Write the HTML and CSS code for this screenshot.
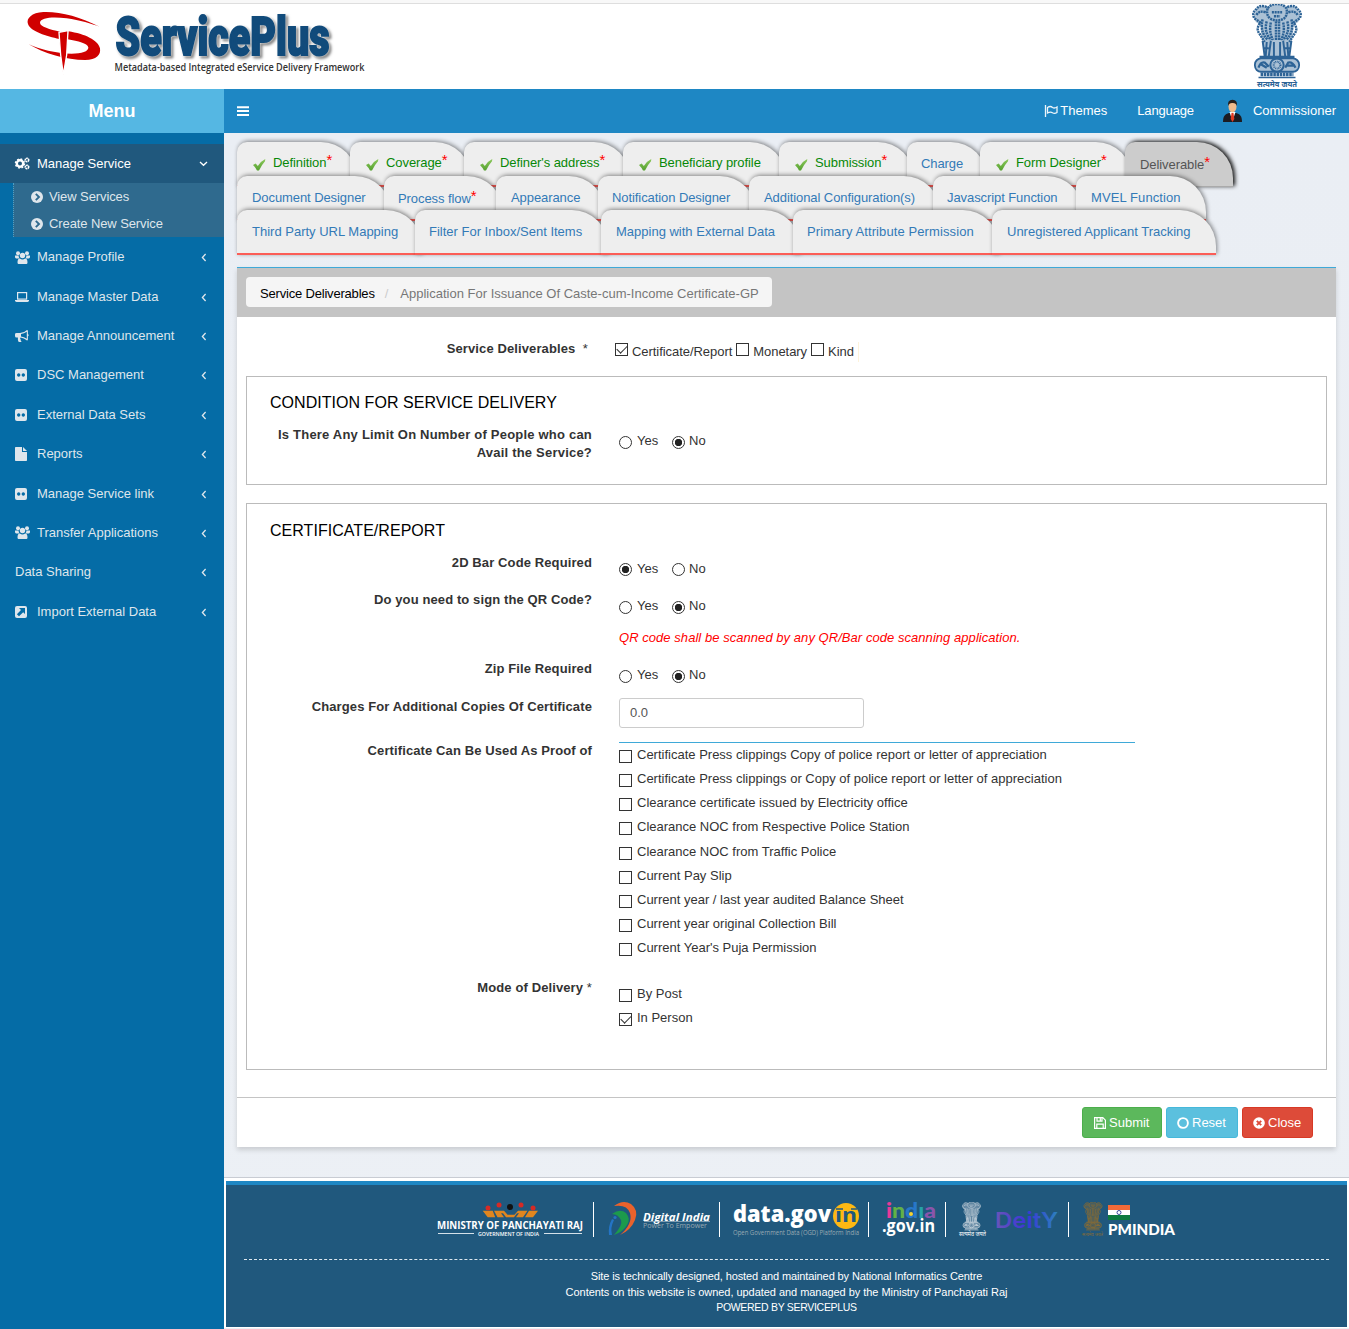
FILE: index.html
```html
<!DOCTYPE html>
<html lang="en">
<head>
<meta charset="utf-8">
<title>ServicePlus</title>
<link rel="stylesheet" href="styles.css">
</head>
<body>
<svg class="defs" width="0" height="0" aria-hidden="true">
  <symbol id="chev-left" viewBox="0 0 6 9"><path d="M4.6 1 1.4 4.5 4.6 8" fill="none" stroke="currentColor" stroke-width="1.3"/></symbol>
  <symbol id="users" viewBox="0 0 15 13"><circle cx="3" cy="2.2" r="2"/><circle cx="12" cy="2.2" r="2"/><path d="M0 4.5h3.6a4.4 4.4 0 0 0 .9 2.9H1.2Q0 7.4 0 6ZM15 4.500h-3.600a4.400 4.400 0 0 1-.9 2.900h3.300Q15 7.400 15 6Z"/><circle cx="7.500" cy="4.500" r="2.700"/><path d="M2.500 11.400c0-2.400.8-4 2.400-4 1.700 1.300 3.500 1.300 5.200 0 1.600 0 2.400 1.600 2.400 4 0 1-.7 1.600-1.600 1.600H4.100c-.9 0-1.600-.6-1.600-1.600Z"/></symbol>
  <symbol id="flickr" viewBox="0 0 12 12"><path fill-rule="evenodd" d="M2 0h8a2 2 0 0 1 2 2v8a2 2 0 0 1-2 2H2a2 2 0 0 1-2-2V2a2 2 0 0 1 2-2ZM3.700 4.300a1.700 1.700 0 1 0 .01 0ZM8.300 4.300a1.700 1.700 0 1 0 .01 0Z"/></symbol>
  <symbol id="circle-right" viewBox="0 0 12 12"><circle cx="6" cy="6" r="6"/><path d="M4.800 2.800 8 6 4.800 9.200" fill="none" stroke="#2f6a8e" stroke-width="1.900"/></symbol>
  <symbol id="tick" viewBox="0 0 13 13"><path d="M0 7 2.700 5.600 4.800 8Q8 3 12.300 1L12 3.200Q8.500 7 6 12.500H4Q2.500 9.500 0 7Z" fill="url(#green)"/></symbol>
  <linearGradient id="green" x1="0" y1="0" x2="0" y2="1"><stop offset="0" stop-color="#8cc95c"/><stop offset="1" stop-color="#55a02f"/></linearGradient>
  <symbol id="emblem" viewBox="0 0 50 74">
    <path fill="currentColor" opacity=".4" d="M15 3Q6 0 4 8q-4 5 1 10 5 2 4 7l4 26h24l4-26q-1-5 4-7 5-5 1-10-2-8-11-5-10-5-20 0ZM8 53h34q8 6 0 13H8q-8-6 0-13Z"/>
    <g fill="none" stroke="currentColor">
      <g stroke-width="2.400" stroke-dasharray="2 .7">
        <path d="M15 3Q8 0 5 5q-5 4-2 9l6 4q-5 6-1 11l5 8"/>
        <path d="M35 3q7-3 10 2 5 4 2 9l-6 4q5 6 1 11l-5 8"/>
        <path d="M16 4q3-4 9-4t9 4q2 6-2 10-7 4-14 0-4-4-2-10Z"/>
        <path d="M14 8q-7-2-9 3M36 8q7-2 9 3M11 15q-3 12 5 20M39 15q3 12-5 20M15 17q-3 10 4 18M35 17q3 10-4 18M19 18q-2 9 2 17M31 18q2 9-2 17M24 17v18M27 17v18M20 8h10M22 12h6"/>
      </g>
      <path stroke-width="1.900" d="M11 36l2 15M15 37l-1 14M19 36l-2 15M22 37v14M28 37v14M31 36l2 15M35 37l1 14M39 36l-2 15M12 43h5M32 43h6"/>
      <rect x="3.500" y="53" width="43" height="13" rx="6" stroke-width="1.800"/>
      <circle cx="25" cy="59.500" r="6.500" stroke-width="2"/><circle cx="25" cy="59.500" r="3.300" stroke-width="2" stroke-dasharray=".8 .7"/>
      <path stroke-width="2.200" d="M7 62q2-6 6-5l4 4M8 58l7 4M33 62l3-5q4-1 7 5M35 60h7M8 51.500h34"/>
      <path stroke-width="3.500" stroke-dasharray="2.500 .6" d="M9 68.500h32"/>
      <path stroke-width="1.500" d="M7 71.500h36"/>
    </g>
  </symbol>
</svg>

<header class="banner">
  <svg class="brand" viewBox="0 0 360 80" width="360" height="80">
    <g transform="scale(.3333) translate(-60 -12)" fill="#d00000">
      <path d="M299 80C240 50 180 34 130 36 95 38 78 55 84 72c8 23 56 36 94 45l2-22c-30-7-60-15-60-27 2-16 40-18 80-13 40 5 75 17 99 25Z"/>
      <path d="M85 132c45 28 115 48 170 48 35 0 48-15 45-35-6-25-45-43-95-51l-2 24c32 6 59 12 62 24 1 13-20 19-50 19-50-1-95-13-130-29Z"/>
      <path d="M177 97l27-5-4 73-10 59-8-59Z" stroke="#fff" stroke-width="4"/>
    </g>
    <text class="brand-name" x="95.500" y="51" textLength="214" lengthAdjust="spacingAndGlyphs">ServicePlus</text>
    <text class="brand-tag" x="94.500" y="66.500" textLength="250" lengthAdjust="spacingAndGlyphs">Metadata-based Integrated eService Delivery Framework</text>
  </svg>
  <div class="state-emblem">
    <svg width="54" height="76"><use href="#emblem" width="54" height="76"/></svg>
    <svg width="42" height="9"><text class="motto" x="1" y="7" textLength="40" lengthAdjust="spacingAndGlyphs">सत्यमेव जयते</text></svg>
  </div>
</header>

<nav class="topbar">
  <div class="menu-title">Menu</div>
  <svg class="burger" width="12" height="10"><path d="M0 1.200h12M0 5.100h12M0 9h12" stroke="#fff" stroke-width="2"/></svg>
  <div class="top-links">
    <span class="themes"><svg width="14" height="12"><path d="M1.500 0v12M3.500 2.500q3-2 5 0 2 1.200 4.500-.5v5.500q-2.500 1.700-4.500.3-2-1.600-5 .2Z" fill="none" stroke="#eef5fa" stroke-width="1.300"/></svg>Themes</span>
    <span class="language">Language</span>
    <span class="user"><svg width="19" height="24"><path d="M0 23c0-6 2-8 6-9h7c4 1 6 3 6 9Z" fill="#1c1c22"/><path d="M6.500 13h6l-3 9Z" fill="#fff"/><path d="M8.500 14h2l.8 6-1.800 3-1.800-3Z" fill="#e23a20"/><ellipse cx="9.500" cy="7.500" rx="4" ry="6" fill="#f0bb8c"/><path d="M5.300 7Q4 1 9.500.8 15 1 13.700 7 13 3.500 9 4 6 4 5.300 7Z" fill="#28201c"/></svg>Commissioner</span>
  </div>
</nav>

<div class="layout">
  <aside class="sidebar">
    <div class="item active"><span class="ico"><svg width="15" height="13" viewBox="0 0 15 13"><circle cx="5" cy="6.500" r="3.200" fill="none" stroke="#fff" stroke-width="2.400"/><circle cx="5" cy="6.500" r="4.500" fill="none" stroke="#fff" stroke-width="1.500" stroke-dasharray="1.800 1.734"/><circle cx="12" cy="3" r="1.700" fill="none" stroke="#fff" stroke-width="1.600" stroke-dasharray="1.700 .4"/><circle cx="12" cy="10" r="1.700" fill="none" stroke="#fff" stroke-width="1.600" stroke-dasharray="1.700 .4"/></svg></span>Manage Service<svg class="arrow down" width="9" height="6"><path d="M1 1l3.500 3.300L8 1" fill="none" stroke="#fff" stroke-width="1.300"/></svg></div>
    <div class="submenu">
      <div><svg width="12" height="12"><use href="#circle-right"/></svg>View Services</div>
      <div><svg width="12" height="12"><use href="#circle-right"/></svg>Create New Service</div>
    </div>
    <div class="item"><span class="ico"><svg width="15" height="13"><use href="#users"/></svg></span>Manage Profile<svg class="arrow" width="6" height="9"><use href="#chev-left"/></svg></div>
    <div class="item"><span class="ico"><svg width="14" height="10"><rect x="2.600" y=".6" width="9" height="6.500" fill="none" stroke="#dfe9f0" stroke-width="1.200"/><path d="M0 8h14v.6q0 1.400-1.500 1.400h-11Q0 10 0 8.600Z"/></svg></span>Manage Master Data<svg class="arrow" width="6" height="9"><use href="#chev-left"/></svg></div>
    <div class="item"><span class="ico"><svg width="14" height="12"><path fill-rule="evenodd" d="M12 0q.9 0 .9.900v3.200a1.200 1.200 0 0 1 0 2.200v3.300q0 .900-.9.900-3-2.600-6.500-2.900-.9 1 .2 1.900-.5 1.200.9 2-1 1-3.100.2Q2.600 9.800 2.900 7.500H1.500Q0 7.500 0 6V4.400Q0 3 1.500 3H5Q9 3 12 0ZM11.800 1.800Q9 3.800 6 4v2.600q3 .3 5.800 2.200Z"/></svg></span>Manage Announcement<svg class="arrow" width="6" height="9"><use href="#chev-left"/></svg></div>
    <div class="item"><span class="ico"><svg width="12" height="12"><use href="#flickr"/></svg></span>DSC Management<svg class="arrow" width="6" height="9"><use href="#chev-left"/></svg></div>
    <div class="item"><span class="ico"><svg width="12" height="12"><use href="#flickr"/></svg></span>External Data Sets<svg class="arrow" width="6" height="9"><use href="#chev-left"/></svg></div>
    <div class="item"><span class="ico"><svg width="12" height="14"><path d="M.8 0H7v5h5v8.200q0 .800-.8.800H.8q-.8 0-.8-.8V.8Q0 0 .8 0ZM8 0l4 4H8Z"/></svg></span>Reports<svg class="arrow" width="6" height="9"><use href="#chev-left"/></svg></div>
    <div class="item"><span class="ico"><svg width="12" height="12"><use href="#flickr"/></svg></span>Manage Service link<svg class="arrow" width="6" height="9"><use href="#chev-left"/></svg></div>
    <div class="item"><span class="ico"><svg width="15" height="13"><use href="#users"/></svg></span>Transfer Applications<svg class="arrow" width="6" height="9"><use href="#chev-left"/></svg></div>
    <div class="item">Data Sharing<svg class="arrow" width="6" height="9"><use href="#chev-left"/></svg></div>
    <div class="item"><span class="ico"><svg width="12" height="12"><rect width="12" height="12" rx="2"/><path d="M4 2h6v6L8.200 6.200 4 10.200 1.900 8.200 6 4Z" fill="#056ca6"/></svg></span>Import External Data<svg class="arrow" width="6" height="9"><use href="#chev-left"/></svg></div>
  </aside>

  <main class="content">
    <div class="tabs">
      <div class="tab-row first">
        <a class="tab done"><svg width="13" height="13"><use href="#tick"/></svg>Definition<sup>*</sup></a>
        <a class="tab done"><svg width="13" height="13"><use href="#tick"/></svg>Coverage<sup>*</sup></a>
        <a class="tab done"><svg width="13" height="13"><use href="#tick"/></svg>Definer's address<sup>*</sup></a>
        <a class="tab done"><svg width="13" height="13"><use href="#tick"/></svg>Beneficiary profile</a>
        <a class="tab done"><svg width="13" height="13"><use href="#tick"/></svg>Submission<sup>*</sup></a>
        <a class="tab low">Charge</a>
        <a class="tab done"><svg width="13" height="13"><use href="#tick"/></svg>Form Designer<sup>*</sup></a>
        <a class="tab current">Deliverable<sup>*</sup></a>
      </div>
      <div class="tab-row second">
        <a class="tab">Document Designer</a>
        <a class="tab low">Process flow<sup>*</sup></a>
        <a class="tab">Appearance</a>
        <a class="tab">Notification Designer</a>
        <a class="tab">Additional Configuration(s)</a>
        <a class="tab">Javascript Function</a>
        <a class="tab">MVEL Function</a>
      </div>
      <div class="tab-row third">
        <a class="tab">Third Party URL Mapping</a>
        <a class="tab">Filter For Inbox/Sent Items</a>
        <a class="tab">Mapping with External Data</a>
        <a class="tab">Primary Attribute Permission</a>
        <a class="tab">Unregistered Applicant Tracking</a>
      </div>
    </div>

    <section class="box">
      <div class="box-head">
        <div class="crumbs"><span class="crumb-home">Service Deliverables</span><span class="slash">/</span><span>Application For Issuance Of Caste-cum-Income Certificate-GP</span></div>
      </div>
      <div class="box-body">
        <div class="row deliverables">
          <div class="label">Service Deliverables&nbsp; <i class="star">*</i></div>
          <div class="inline-checks">
            <span class="check on"></span><span>Certificate/Report</span><span class="check"></span><span>Monetary</span><span class="check"></span><span>Kind</span>
          </div>
        </div>
        <div class="panel condition">
          <h2>CONDITION FOR SERVICE DELIVERY</h2>
          <div class="row">
            <div class="label">Is There Any Limit On Number of People who can Avail the Service?</div>
            <div class="radios"><span class="radio"></span><span class="yes">Yes</span><span class="radio on"></span><span>No</span></div>
          </div>
        </div>
        <div class="panel certificate">
          <h2>CERTIFICATE/REPORT</h2>
          <div class="row r-barcode"><div class="label">2D Bar Code Required</div>
            <div class="radios"><span class="radio on"></span><span class="yes">Yes</span><span class="radio"></span><span>No</span></div></div>
          <div class="row r-sign"><div class="label">Do you need to sign the QR Code?</div>
            <div><div class="radios"><span class="radio"></span><span class="yes">Yes</span><span class="radio on"></span><span>No</span></div>
            <p class="note">QR code shall be scanned by any QR/Bar code scanning application.</p></div></div>
          <div class="row r-zip"><div class="label">Zip File Required</div>
            <div class="radios"><span class="radio"></span><span class="yes">Yes</span><span class="radio on"></span><span>No</span></div></div>
          <div class="row r-charges"><div class="label">Charges For Additional Copies Of Certificate</div>
            <div class="input">0.0</div></div>
          <div class="row r-proof"><div class="label">Certificate Can Be Used As Proof of</div>
            <div class="list">
              <div class="opt"><span class="check"></span>Certificate Press clippings Copy of police report or letter of appreciation</div>
              <div class="opt"><span class="check"></span>Certificate Press clippings or Copy of police report or letter of appreciation</div>
              <div class="opt"><span class="check"></span>Clearance certificate issued by Electricity office</div>
              <div class="opt"><span class="check"></span>Clearance NOC from Respective Police Station</div>
              <div class="opt"><span class="check"></span>Clearance NOC from Traffic Police</div>
              <div class="opt"><span class="check"></span>Current Pay Slip</div>
              <div class="opt"><span class="check"></span>Current year / last year audited Balance Sheet</div>
              <div class="opt"><span class="check"></span>Current year original Collection Bill</div>
              <div class="opt"><span class="check"></span>Current Year's Puja Permission</div>
            </div></div>
          <div class="row"><div class="label">Mode of Delivery <i class="star">*</i></div>
            <div class="modes">
              <div class="opt"><span class="check"></span>By Post</div>
              <div class="opt"><span class="check on"></span>In Person</div>
            </div></div>
        </div>
      </div>
      <div class="box-foot">
        <span class="btn submit"><svg width="12" height="12"><path fill="none" stroke="#fff" stroke-width="1.200" d="M.6.6h8.200l2.600 2.600v8.200H.6ZM3 .6v3.600h5V.6M2.800 11.400V7.200h6.400v4.200M6.300 1v2.500"/></svg>Submit</span>
        <span class="btn reset"><svg width="12" height="12"><circle cx="6" cy="6" r="4.900" fill="none" stroke="#fff" stroke-width="1.900"/></svg>Reset</span>
        <span class="btn close"><svg width="12" height="12"><circle cx="6" cy="6" r="5.800" fill="#fff"/><path d="M3.800 3.800l4.400 4.400M8.200 3.800 3.800 8.200" stroke="#dd4b39" stroke-width="1.900"/></svg>Close</span>
      </div>
    </section>

    <footer class="footer">
      <div class="logos">
        <svg class="panchayat" width="147" height="35">
          <path fill="#e0861f" d="M45.700 8.700h10l2.500 6.600h-7.500ZM57 8.700h10l3.500 4h7l3.500-4h9.500l-4.500 6.600h-7l3-4h-2l-3 4H69l-3-4h-2l3 4h-6.500ZM92 8.700h9l-5 6.600h-8Z"/>
          <g fill="#d62a25"><circle cx="51" cy="6" r="2.500"/><circle cx="62" cy="3" r="2.500"/><circle cx="84" cy="3" r="2.500"/><circle cx="96" cy="6" r="2.500"/></g><circle cx="73" cy="5" r="3" fill="#111"/>
          <text class="open bold" x="0" y="26.500" font-size="10.300" textLength="146" lengthAdjust="spacingAndGlyphs">MINISTRY OF PANCHAYATI RAJ</text>
          <text class="open semi" x="41" y="33.500" font-size="5.500" textLength="61" lengthAdjust="spacingAndGlyphs">GOVERNMENT OF INDIA</text>
          <path d="M1 31.500h36M107 31.500h38" stroke="#d5e1e9"/>
        </svg>
        <svg class="digital" width="104" height="35">
          <path d="M6 4Q15-3 23 2q8 6 4 16-4 10-15 15Q25 22 22 11 19 2 6 4Z" fill="#e9622c"/>
          <path d="M4 12q8-6 14-1 5 6 1 12-4 7-13 10 9-10 7-15-3-6-9-6Z" fill="#1c9a4c"/>
          <path d="M1 33Q0 24 4 17l2 1q-4 8-2 15Z" fill="#2474c5"/><circle cx="7" cy="15.500" r="1.600" fill="#2474c5"/>
          <text class="open bold ital" x="35" y="18.500" font-size="10.500" textLength="67" lengthAdjust="spacingAndGlyphs">Digital India</text>
          <path d="M36 19.500h66" stroke="#a9bdca" stroke-width=".7"/>
          <text class="grey" x="35" y="26" font-size="6.500" textLength="64" lengthAdjust="spacingAndGlyphs">Power To Empower</text>
        </svg>
        <svg class="datagov" width="127" height="36">
          <circle cx="113" cy="14" r="13" fill="#fdb813"/>
          <text class="open heavy" x="0" y="19.500" font-size="22.500" textLength="98" lengthAdjust="spacingAndGlyphs">data.gov</text>
          <text class="open bold navy" x="102" y="20" font-size="20" textLength="22" lengthAdjust="spacingAndGlyphs">ın</text>
          <path d="M103 7h7M118 7h6" stroke="#20587d" stroke-width="1.500"/>
          <text class="open grey" x="0" y="33" font-size="6.300" textLength="126" lengthAdjust="spacingAndGlyphs">Open Government Data (OGD) Platform India</text>
        </svg>
        <svg class="indiagov" width="54" height="36">
          <text class="india" x="4" y="16" font-size="20" textLength="50" lengthAdjust="spacingAndGlyphs"><tspan fill="#e83a97">i</tspan><tspan fill="#62b146">n</tspan><tspan fill="#2777c9">d</tspan><tspan fill="#26a3a7">ı</tspan><tspan fill="#8a55ab">a</tspan></text>
          <circle cx="29" cy="12" r="2" fill="#f3d334"/>
          <text class="open bold" x="0" y="29.500" font-size="17" textLength="53" lengthAdjust="spacingAndGlyphs">.gov.in</text>
        </svg>
        <svg class="deity" width="102" height="36">
          <g color="#c7d3dc"><use href="#emblem" x="2" y="0" width="23" height="29"/></g>
          <text class="devan" x="1" y="33.500" font-size="5.500" textLength="27" lengthAdjust="spacingAndGlyphs">सत्यमेव जयते</text>
          <linearGradient id="dg"><stop offset="0" stop-color="#6a55b8"/><stop offset=".5" stop-color="#3a35d8"/><stop offset="1" stop-color="#2c83bd"/></linearGradient>
          <text class="deity-name" x="37" y="25.500" font-size="22" textLength="63" lengthAdjust="spacingAndGlyphs">DeitY</text>
        </svg>
        <svg class="pmindia" width="94" height="36">
          <g color="#8a6c32"><use href="#emblem" x="0" y="0" width="22" height="29"/></g>
          <text class="devan gold" x="0" y="33.500" font-size="5" textLength="21" lengthAdjust="spacingAndGlyphs">सत्यमेव जयते</text>
          <path d="M26 3h22v5H26Z" fill="#f26a38"/><path d="M26 8h22v5H26Z" fill="#fff"/><path d="M26 13h22v5H26Z" fill="#0d7a3f"/><circle cx="37" cy="10.500" r="2" fill="none" stroke="#3d4aa0"/>
          <text class="lato" x="26" y="33" font-size="14.500" textLength="67" lengthAdjust="spacingAndGlyphs">PMINDIA</text>
        </svg>
      </div>
      <div class="legal">
        <p class="l1">Site is technically designed, hosted and maintained by National Informatics Centre</p>
        <p class="l2">Contents on this website is owned, updated and managed by the Ministry of Panchayati Raj</p>
        <p class="l3">POWERED BY SERVICEPLUS</p>
      </div>
    </footer>
  </main>
</div>
</body>
</html>
```
FILE: styles.css
```css
* { box-sizing: border-box; }
body { margin: 0; width: 1349px; height: 1329px; overflow: hidden; background: #fff; font: 13px/18px "Liberation Sans", Arial, sans-serif; color: #333; }
h2, p { margin: 0; }
svg { display: block; flex: none; fill: currentColor; overflow: visible; }
.defs { position: absolute; }

/* Banner */
.banner { height: 89px; padding: 0 45px 0 20px; display: flex; justify-content: space-between; background: linear-gradient(#f8f8f8 3px, #dedede 3px, #dedede 4px, #fff 4px); }
.brand { margin-top: 4px; }
.brand-name { font: 900 53px Roboto, sans-serif; fill: #114b7b; stroke: #114b7b; stroke-width: 2px; filter: drop-shadow(0 0 1px #fff) drop-shadow(2px 2px 1px rgba(0, 0, 0, .5)); }
.brand-tag { font: 600 11.500px "Open Sans", sans-serif; fill: #333; }
.state-emblem { padding-top: 4px; display: flex; flex-direction: column; align-items: center; color: #2d6396; }
.motto { font: bold 7.500px "Noto Sans", sans-serif; fill: #2d6396; }

/* Top bar */
.topbar { height: 44px; display: flex; align-items: center; background: #1e87c4; color: #fff; }
.menu-title { width: 224px; height: 44px; background: #55b7e3; font: bold 18px/44px "Liberation Sans", Arial, sans-serif; text-align: center; }
.burger { margin-left: 13px; }
.top-links { margin-left: auto; padding-right: 13px; display: flex; align-items: center; }
.top-links span { display: flex; align-items: center; }
.themes { gap: 2px; }
.language { margin: 0 29px 0 30px; letter-spacing: -.15px; }
.user { gap: 11px; }

/* Sidebar */
.layout { display: flex; height: 1196px; }
.sidebar { width: 224px; padding-top: 11px; background: #056ca6; color: #dfe6ec; }
.item { height: 39.4px; padding: 1px 16px 0 15px; display: flex; align-items: center; }
.item.active { height: 39px; padding-top: 0; background: #20587d; color: #fff; }
.ico { width: 22px; }
.arrow { margin: 1px 1px 0 auto; }
.arrow.down { margin-right: 0; }
.submenu { height: 54px; margin-left: 13px; border-left: 1px dotted #4f9fc4; background: #2f6a8e; letter-spacing: -.1px; }
.submenu div { height: 27px; padding-left: 17px; display: flex; align-items: center; gap: 6px; }

/* Tabs */
.content { flex: 1; min-width: 0; background: linear-gradient(#eaeef4, #ecf0f5); display: flex; flex-direction: column; }
.tabs { height: 134px; padding: 9px 0 0 13px; }
.tab-row { display: flex; height: 34px; position: relative; }
.tab { position: relative; flex: none; height: 45px; margin-right: -7px; padding: 13px 0 0 15px; display: flex; white-space: nowrap; background: #eee; border-bottom: 2px solid #fb5d57; border-radius: 10px 36px 0 0; box-shadow: 1px -1px 4px rgba(0, 0, 0, .45); color: #337ab7; line-height: 17px; }
.first, .second { letter-spacing: -.08px; }
.tab.low { padding-top: 14px; }
.tab.done { padding-top: 12px; color: #078807; }
.tab.current { padding-top: 14px; background: #ccc; border-bottom: 1px solid #aaa; box-shadow: 2px -1px 4px #111; color: #555; }
.tab svg { margin: 4px 7px 0 1px; }
.tab sup { font-size: 15px; line-height: 14px; color: #f00; margin-top: -1px; }
.first .tab:nth-child(1) { width: 120px; }
.first .tab:nth-child(2) { width: 121px; }
.first .tab:nth-child(3) { width: 166px; }
.first .tab:nth-child(4) { width: 163px; }
.first .tab:nth-child(5) { width: 135px; }
.first .tab:nth-child(6) { width: 80px; padding-left: 14px; padding-top: 13px; }
.first .tab:nth-child(7) { width: 152px; }
.first .tab:nth-child(8) { width: 108px; }
.second .tab:nth-child(1) { width: 154px; }
.second .tab:nth-child(2) { width: 119px; padding-left: 14px; }
.second .tab:nth-child(3) { width: 109px; }
.second .tab:nth-child(4) { width: 158px; padding-left: 14px; }
.second .tab:nth-child(5) { width: 191px; }
.second .tab:nth-child(6) { width: 150px; padding-left: 14px; }
.second .tab:nth-child(7) { width: 130px; letter-spacing: .1px; }
.third .tab:nth-child(1) { width: 185px; }
.third .tab:nth-child(2) { width: 193px; padding-left: 14px; }
.third .tab:nth-child(3) { width: 199px; }
.third .tab:nth-child(4) { width: 206px; padding-left: 14px; letter-spacing: .1px; }
.third .tab:nth-child(5) { width: 224px; }

/* Main box */
.box { width: 1099px; height: 880px; margin-left: 13px; background: #fff; border-top: 1px solid #3fa9d8; box-shadow: 0 3px 5px rgba(0, 0, 0, .15); }
.box-head { height: 49px; padding: 9px; background: #c4c4c4; }
.crumbs { width: 526px; height: 30px; padding-left: 14px; background: #f5f5f5; border-radius: 4px; line-height: 33px; display: flex; color: #777; white-space: nowrap; }
.crumb-home { color: #000; letter-spacing: -.19px; }
.slash { margin: 0 12px 0 10px; color: #ccc; }
.box-body { height: 780px; padding: 0 9px; }
.row { display: flex; }
.label { width: 322px; margin-right: 27px; padding-top: 1px; font-weight: bold; text-align: right; line-height: 20px; letter-spacing: .11px; flex: none; white-space: nowrap; }
.star { font-weight: normal; font-style: normal; }
.deliverables { height: 59px; padding-top: 21px; }
.deliverables .label { width: 342px; }
.inline-checks { height: 26px; display: flex; align-items: center; gap: 4px; letter-spacing: -.05px; line-height: 20px; padding-top: 1px; }
.inline-checks .check { margin-top: -4px; }
.inline-checks::after { content: ""; width: 1px; height: 20px; background: #fdf3dc; }
.panel { border: 1px solid #bbb; padding: 15px 23px 0; }
.panel h2 { height: 33px; font: 16px/21px "Liberation Sans", Arial, sans-serif; letter-spacing: .04px; color: #000; }
.condition { height: 109px; margin-bottom: 18px; }
.condition .label { line-height: 18px; white-space: normal; letter-spacing: .21px; }
.certificate { height: 567px; padding-top: 16px; }
.certificate h2 { height: 32px; }
.radios { height: 20px; margin-top: 6px; display: flex; align-items: center; line-height: 19px; }
.condition .radios { margin-top: 5px; }
.radio { width: 13px; height: 13px; margin: 2px 5px 0 0; border: 1px solid #333; border-radius: 50%; background: #fff; }
.condition .radio, .r-sign .radio, .r-zip .radio { margin-top: 4px; }
.radio.on { background: radial-gradient(circle, #222 3.400px, #fff 4px); }
.radios .yes { width: 35px; }
.radios .yes + .radio { margin-right: 4px; }
.check { position: relative; width: 13px; height: 13px; border: 1px solid #333; background: #fff; flex: none; }
.check.on::after { content: ""; position: absolute; left: 1px; top: 1px; width: 9px; height: 5px; border: solid #333; border-width: 0 0 1.500px 1.500px; transform: rotate(-45deg); }
.r-barcode { height: 37px; }
.r-sign { height: 69px; }
.note { margin-top: 14px; font-style: italic; color: #f00; line-height: 18px; letter-spacing: .05px; }
.r-zip { height: 38px; }
.r-charges { height: 44px; }
.input { width: 245px; height: 30px; margin-top: 2px; padding-left: 10px; border: 1px solid #ccc; border-radius: 3px; line-height: 28px; color: #555; }
.r-proof { height: 237px; }
.list { width: 516px; margin-top: 2px; border-top: 1px solid #3fa9d8; }
.opt { height: 24.150px; display: flex; align-items: flex-start; line-height: 23px; white-space: nowrap; }
.opt .check { margin: 7px 5px 0 0; }
.modes { padding-top: 5px; }
.box-foot { height: 50px; padding: 9px 23px 0 0; border-top: 1px solid #c4c4c4; display: flex; justify-content: flex-end; gap: 4px; }
.btn { height: 31px; padding-left: 11px; display: flex; align-items: center; gap: 3px; border: 1px solid; border-radius: 3px; color: #fff; }
.submit { width: 80px; background: #5cb85c; border-color: #4cae4c; }
.reset { width: 72px; padding-left: 10px; background: #5bc0de; border-color: #46b8da; }
.close { width: 71px; padding-left: 10px; background: #dd4b39; border-color: #d73925; }

/* Footer */
.footer { height: 150px; margin-top: 31px; border: solid #fff; border-width: 3px 2px 1px; background: linear-gradient(#1e87c4 4px, #20587d 4px); box-shadow: 0 -1px #c8ccd3; }
.footer text { fill: #fff; }
.logos { height: 79px; margin: 0 18px; padding: 21px 0 0 193px; display: flex; border-bottom: 1px dashed #dde7ee; }
.logos > svg + svg { height: 35px; border-left: 1px solid #fff; }
.digital { margin-left: 9px; width: 126px; padding-left: 14px; }
.datagov { width: 149px; padding-left: 13px; }
.indiagov { width: 77px; padding-left: 13px; }
.deity { width: 123px; padding-left: 12px; }
.pmindia { width: 110px; padding-left: 13px; }
.open { font-family: "Open Sans", sans-serif; }
.bold { font-weight: 700; }
.semi { font-weight: 600; }
.heavy { font-weight: 800; }
.ital { font-style: italic; }
.footer .grey { fill: #9aa9b2; font-family: "Open Sans", sans-serif; }
.footer .navy { fill: #20587d; }
.india { font-family: Lato, sans-serif; font-weight: 900; }
.devan { font-family: "Noto Sans", sans-serif; }
.footer .gold { fill: #8a6c32; }
.footer .deity-name { font-family: Inter, sans-serif; font-weight: 600; fill: url(#dg); }
.lato { font-family: Lato, sans-serif; font-weight: 900; }
.legal { padding-top: 9px; text-align: center; color: #fff; font-size: 11px; line-height: 15.500px; }
.l1 { letter-spacing: -.11px; }
.l2 { letter-spacing: -.045px; }
.l3 { font-size: 10.500px; letter-spacing: -.3px; }
```
